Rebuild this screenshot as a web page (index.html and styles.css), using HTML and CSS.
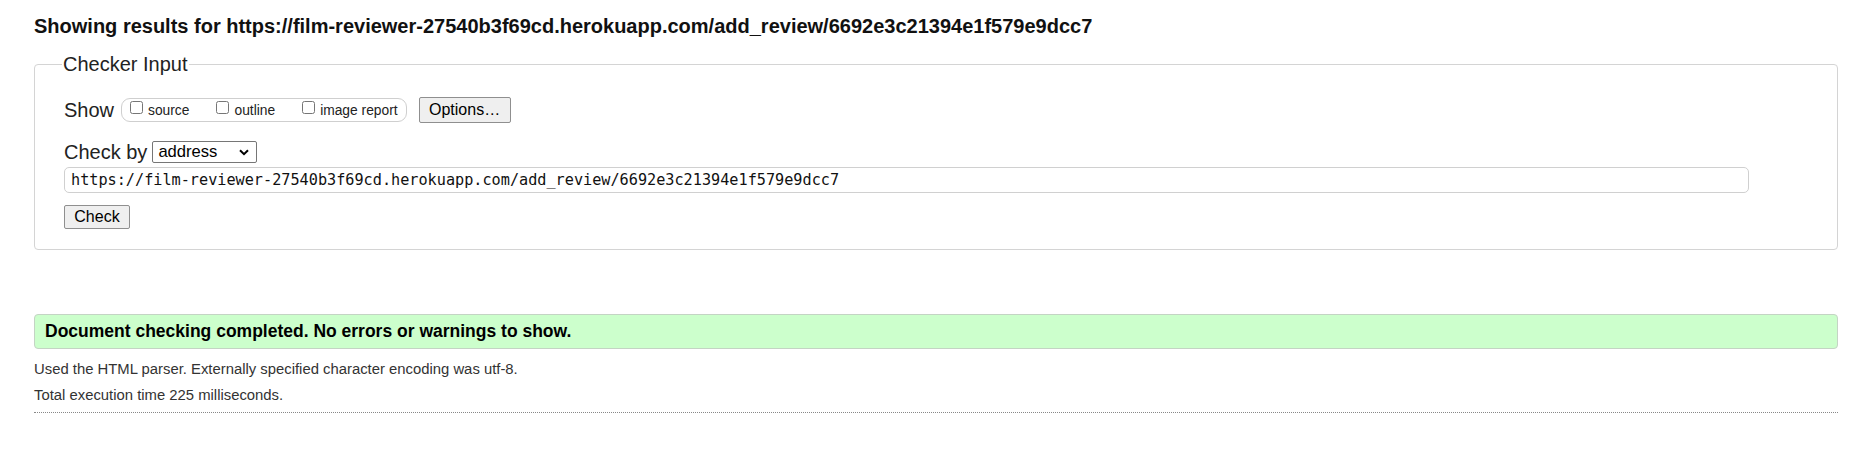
FILE: index.html
```html
<!DOCTYPE html>
<html lang="en">
<head>
<meta charset="utf-8">
<title>Showing results</title>
<link rel="stylesheet" href="styles.css">
</head>
<body>
<main class="page">
  <h2 class="title">Showing results for https://film-reviewer-27540b3f69cd.herokuapp.com/add_review/6692e3c21394e1f579e9dcc7</h2>
  <form class="checker">
    <fieldset class="checker-box">
      <legend class="checker-legend">Checker Input</legend>
      <div class="show-row">
        <span class="label">Show</span>
        <fieldset class="show-box">
          <label class="opt"><input type="checkbox" class="cb"><span>source</span></label>
          <label class="opt"><input type="checkbox" class="cb"><span>outline</span></label>
          <label class="opt"><input type="checkbox" class="cb"><span>image report</span></label>
        </fieldset>
        <button type="button" class="btn btn-options">Options…</button>
      </div>
      <div class="by-row">
        <span class="label">Check by</span>
        <span class="select"><span class="select-text">address</span><svg class="chev" width="10" height="7" viewBox="0 0 10 7"><path d="M1 1.2 L5 5.2 L9 1.2" fill="none" stroke="#000" stroke-width="2"/></svg></span>
      </div>
      <div class="url">https://film-reviewer-27540b3f69cd.herokuapp.com/add_review/6692e3c21394e1f579e9dcc7</div>
      <div class="check-row"><button type="button" class="btn btn-check">Check</button></div>
    </fieldset>
  </form>
  <div class="success">Document checking completed. No errors or warnings to show.</div>
  <p class="meta meta-first">Used the HTML parser. Externally specified character encoding was utf-8.</p>
  <p class="meta">Total execution time 225 milliseconds.</p>
  <hr class="rule">
</main>
</body>
</html>
```

FILE: styles.css
```css
html, body {
  margin: 0;
  padding: 0;
  background: #fff;
}
body {
  font-family: "Liberation Sans", Arial, sans-serif;
  color: #000;
}
.page {
  padding: 15px 19px 0 34px;
}
.title {
  margin: 0;
  font-size: 20px;
  line-height: 22px;
  font-weight: bold;
  color: #111;
}
.checker {
  margin: 15px 0 0 0;
}
.checker-box {
  margin: 0;
  border: 1px solid #d4d4d4;
  border-radius: 4px;
  padding: 21px 29px 20px 29px;
  min-width: 0;
}
.checker-legend {
  font-size: 20px;
  line-height: 24px;
  padding: 0 1px;
  margin-left: -2px;
  color: #222;
}
.label {
  font-size: 20px;
  line-height: 24px;
  color: #222;
}
.show-row {
  display: flex;
  align-items: center;
  height: 26px;
}
.show-box {
  margin: 0 0 0 7px;
  padding: 0 8px 0 8px;
  height: 22px;
  border: 1px solid #cfcfcf;
  border-radius: 9px;
  display: flex;
  gap: 27px;
  align-items: flex-start;
  min-width: 0;
}
.opt {
  display: flex;
  align-items: flex-start;
  gap: 5px;
  font-size: 13.8px;
  line-height: 22px;
  color: #222;
}
.opt span {
  padding-top: 2px;
  line-height: 20px;
}
.cb {
  margin: 2px 0 0 0;
  width: 13px;
  height: 13px;
}
.btn {
  font-family: "Liberation Sans", Arial, sans-serif;
  font-size: 16px;
  color: #000;
  background: #efefef;
  border: 1px solid #8f8f8f;
  border-radius: 2px;
  padding: 0;
}
.btn-options {
  margin-left: 12px;
  width: 92px;
  height: 26px;
}
.by-row {
  display: flex;
  align-items: center;
  margin-top: 18px;
  height: 22px;
  gap: 5px;
}
.select {
  display: flex;
  align-items: center;
  justify-content: space-between;
  box-sizing: border-box;
  width: 105px;
  height: 22px;
  border: 1px solid #767676;
  border-radius: 2px;
  padding: 0 7px 0 5px;
  font-size: 16.6px;
  color: #000;
}
.chev {
  display: block;
}
.url {
  margin-top: 4px;
  box-sizing: border-box;
  width: 1685px;
  height: 26px;
  border: 1px solid #d0d0d0;
  border-radius: 5px;
  padding: 0 6px;
  font-family: "DejaVu Sans Mono", "Liberation Mono", monospace;
  font-size: 15.2px;
  line-height: 24px;
  color: #111;
}
.check-row {
  display: flex;
  margin-top: 12px;
}
.btn-check {
  width: 66px;
  height: 24px;
}
.success {
  margin-top: 64px;
  box-sizing: border-box;
  height: 35px;
  background: #ccffcc;
  border: 1px solid #c4d4c4;
  border-radius: 4px;
  padding: 0 10px;
  font-size: 17.5px;
  font-weight: bold;
  line-height: 33px;
  color: #000;
}
.meta {
  margin: 6px 0 0 0;
  font-size: 14.85px;
  line-height: 20px;
  color: #333;
}
.meta-first {
  margin-top: 10px;
}
.rule {
  margin: 7px 0 0 0;
  border: 0;
  border-top: 1px dotted #888;
  height: 0;
}
```
